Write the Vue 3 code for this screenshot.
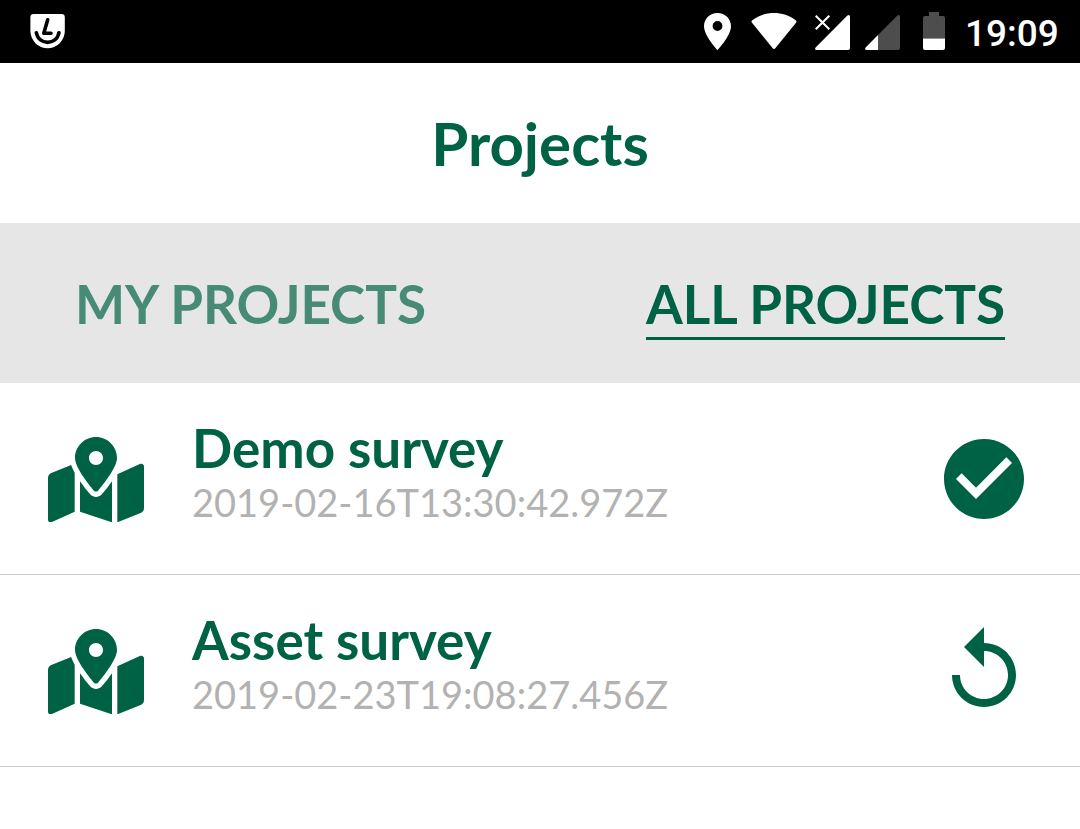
<script setup>
const projects = [
  { name: 'Demo survey', date: '2019-02-16T13:30:42.972Z', done: true },
  { name: 'Asset survey', date: '2019-02-23T19:08:27.456Z', done: false },
]
const mapPath =
  'M288 0c-69.59 0-126 56.41-126 126 0 56.26 82.35 158.8 113.9 196.02 6.39 7.54 17.82 7.54 24.2 0C331.65 284.8 414 182.26 414 126 414 56.41 357.59 0 288 0zm0 168c-23.2 0-42-18.8-42-42s18.8-42 42-42 42 18.8 42 42-18.8 42-42 42zM20.12 215.95A32.006 32.006 0 0 0 0 245.66v250.32c0 11.32 11.43 19.06 21.94 14.86L160 448V214.92c-8.84-15.98-16.07-31.54-21.25-46.42L20.12 215.95zM288 359.67c-14.07 0-27.38-6.18-36.51-16.96-19.66-23.2-40.57-49.62-59.49-76.72v182l192 64V266c-18.92 27.09-39.82 53.52-59.49 76.72-9.13 10.77-22.44 16.95-36.51 16.95zm266.06-198.51L416 224v288l139.88-55.95A31.996 31.996 0 0 0 576 426.34V176.02c0-11.32-11.43-19.06-21.94-14.86z'
const checkPath =
  'M12 2C6.48 2 2 6.48 2 12s4.48 10 10 10 10-4.48 10-10S17.52 2 12 2zm-2 15l-5-5 1.41-1.41L10 14.17l7.59-7.59L19 8l-9 9z'
const replayPath =
  'M12 5V1L7 6l5 5V7c3.31 0 6 2.69 6 6s-2.69 6-6 6-6-2.69-6-6H4c0 4.42 3.58 8 8 8s8-3.58 8-8-3.58-8-8-8z'
</script>

<template>
  <div class="screen">
    <div class="status">
      <svg class="badge" width="36" height="63" viewBox="30 0 36 63">
        <path fill="#fff" d="M33.5 14h28q3.3 0 3.3 3.300V31a17.200 17.200 0 0 1-34.400 0V17.300q0-3.300 3.100-3.300z" />
        <path class="line" d="M47.700 19.800L43.800 33.300H51" />
        <path class="line" d="M36.300 32.700C38.900 45.600 56.400 45.600 59 32.700" />
      </svg>
      <svg width="28" height="63" viewBox="704 0 28 63">
        <path fill="#fff" fill-rule="evenodd" d="M717.500 13c-7.500 0-13.500 5.900-13.500 13.100C704 36 717.500 50.200 717.500 50.200S731 36 731 26.100C731 18.900 725 13 717.500 13zm0 8.100a4.900 4.900 0 1 1 0 9.800a4.900 4.900 0 0 1 0-9.800z" />
      </svg>
      <svg class="wifi" width="46" height="63" viewBox="751 0 46 63">
        <path fill="#fff" d="M752.300 20.200C765 10.700 783 10.700 795.700 20.200Q797.200 21.300 796 22.800L775.500 48Q774 49.800 772.500 48L752 22.800Q750.800 21.300 752.300 20.200z" />
      </svg>
      <svg class="signal" width="35" height="63" viewBox="815 0 35 63">
        <path fill="#fff" d="M815.600 47.400L847.400 15.600Q850 14 850 17V48Q850 50 848 50H817Q814 50 815.600 47.400z" />
        <path fill="none" stroke="#fff" stroke-width="2.100" d="M815.700 15.700L829.300 29.300M829.300 15.700L815.700 29.300" />
      </svg>
      <svg class="signal-weak" width="35" height="63" viewBox="865 0 35 63">
        <path fill="#4d4d4d" d="M878 35V50H898Q900 50 900 48V17Q900 14 897.400 15.600z" />
        <path fill="#fff" d="M878 35V50H867Q864 50 865.600 47.400z" />
      </svg>
      <svg class="battery" width="22" height="63" viewBox="923 0 22 63">
        <path fill="#4d4d4d" d="M929 12h10v4h4q2 0 2 2v20.500h-22V18q0-2 2-2h4z" />
        <path fill="#fff" d="M923 38.500h22V48q0 2-2 2h-18q-2 0-2-2z" />
      </svg>
      <span class="time">19:09</span>
    </div>
    <header class="header">Projects</header>
    <nav class="tabs">
      <span class="tab">MY PROJECTS</span>
      <span class="tab active">ALL PROJECTS</span>
    </nav>
    <div v-for="p in projects" :key="p.name" class="row">
      <svg class="map" viewBox="0 0 576 512"><path :d="mapPath" /></svg>
      <div class="info">
        <div class="name">{{ p.name }}</div>
        <div class="date">{{ p.date }}</div>
      </div>
      <svg class="action" viewBox="0 0 24 24"><path :d="p.done ? checkPath : replayPath" /></svg>
    </div>
  </div>
</template>

<style>
body { margin: 0; background: #fff; }
</style>
<style scoped>
.screen {
  width: 1080px;
  height: 829px;
  overflow: hidden;
  background: #fff;
  color: #006245;
  font-family: Lato, sans-serif;
}
.status {
  display: flex;
  height: 63px;
  box-sizing: border-box;
  padding: 0 22px 0 30px;
  background: #000;
}
.status svg { flex: none; }
.badge { margin-right: 638px; }
.line {
  fill: none;
  stroke: #000;
  stroke-width: 3.6;
  stroke-linecap: round;
  stroke-linejoin: round;
}
.wifi { margin-left: 19px; }
.signal { margin-left: 18px; }
.signal-weak { margin-left: 15px; }
.battery { margin-left: 23px; }
.time {
  margin-left: 20px;
  color: #fff;
  font: 500 37px/68px Roboto, sans-serif;
  white-space: nowrap;
}
.header {
  height: 160px;
  font-size: 60px;
  font-weight: 700;
  line-height: 160px;
  text-align: center;
}
.tabs {
  display: flex;
  justify-content: space-between;
  align-items: flex-start;
  height: 160px;
  box-sizing: border-box;
  padding: 48px 75px 0 75px;
  background: #e6e6e6;
}
.tab {
  height: 66px;
  font-size: 53px;
  font-weight: 700;
  line-height: 66px;
  white-space: nowrap;
  color: #478b77;
}
.active { color: #006245; border-bottom: 3px solid #006245; }
.row {
  display: flex;
  align-items: center;
  height: 192px;
  box-sizing: border-box;
  padding: 0 48px;
  border-bottom: 1px solid #c8cccb;
}
.map { width: 96px; height: 85.33px; margin-top: 1.4px; fill: #006245; }
.info { flex: 1; margin-left: 48px; margin-top: -14px; white-space: nowrap; }
.name { font-size: 53px; font-weight: 700; line-height: 60px; }
.date { font-size: 38px; line-height: 48px; color: #b2b2b2; }
.action { width: 96px; height: 96px; fill: #006245; }
</style>
